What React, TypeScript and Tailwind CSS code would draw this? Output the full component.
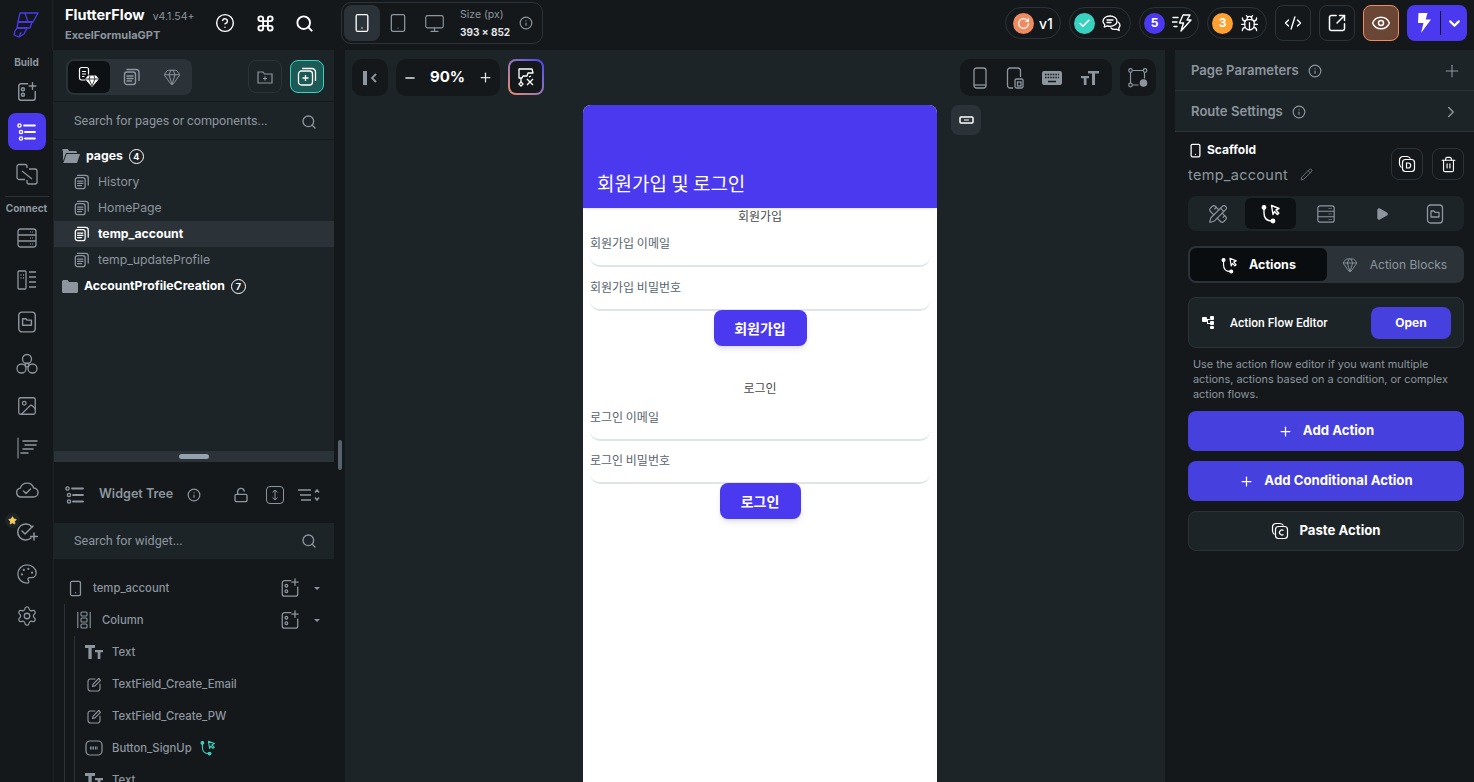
import React from "react";
import {
  CircleHelp, Command, Search, Smartphone, Tablet, Monitor, Info, Minus, Plus, ChevronDown, ChevronRight,
  Eye, Bug, CodeXml, SquareArrowOutUpRight, Check, Trash2, LockOpen,
  Play, Gem, Palette, Settings, Image, Star, RotateCw, Pencil, PencilRuler,
} from "lucide-react";

type P = { s?: number; c?: string };

const Pages = ({ s = 18, c = "#8d969e" }: P) => (
  <svg width={s} height={s} viewBox="0 0 18 18" fill="none" stroke={c} strokeWidth="1.4" strokeLinecap="round" strokeLinejoin="round">
    <rect x="1.5" y="4" width="11" height="12.5" rx="2.5" />
    <path d="M4 1.5h9a3 3 0 0 1 3 3v8" />
    <path d="M4 8h6M4 10.5h6M4 13h4.5" />
  </svg>
);
const ActionFlow = ({ s = 20, c = "#fff" }: P) => (
  <svg width={s} height={s} viewBox="0 0 20 20" fill="none" stroke={c} strokeWidth="1.4" strokeLinecap="round" strokeLinejoin="round">
    <circle cx="3" cy="3.5" r="1.7" fill={c} />
    <circle cx="12" cy="17" r="1.7" fill={c} />
    <path d="M3 5v4c0 5 3 8 8 8" />
    <path d="M10.500 1.500L18 4.500l-3 1.500 2.800 3.200-1.500 1.300L13.500 7.500 12 10.500z" />
  </svg>
);
const AddWidget = ({ s = 20, c = "#8d969e" }: P) => (
  <svg width={s} height={s} viewBox="0 0 20 20" fill="none" stroke={c} strokeWidth="1.3" strokeLinecap="round">
    <path d="M10.5 2.5H4.500a2 2 0 0 0-2 2v11a2 2 0 0 0 2 2h11a2 2 0 0 0 2-2V9.500" />
    <circle cx="6.3" cy="7.5" r="1.4" />
    <circle cx="6.3" cy="12.5" r="1.4" />
    <path d="M15 1.500v6M12 4.500h6" />
  </svg>
);
const Logo = () => (
  <svg width="26" height="28" viewBox="0 0 26 28" fill="none" stroke="#4b39ef" strokeWidth="1.3" strokeLinejoin="round">
    <path d="M7 2h18l-5 9H5z" />
    <path d="M12 2l3 9M5 11h14l-2 6H4z" />
    <path d="M4 17h10l-3 6-5 3-5-2 1-4z" />
    <path d="M6 26l2-5" />
  </svg>
);
const TreeList = ({ c = "#8d969e" }: P) => (
  <svg width="19" height="18" viewBox="0 0 19 18" fill="none" stroke={c} strokeWidth="1.4" strokeLinecap="round">
    <circle cx="2.500" cy="2.500" r="1.600" /><circle cx="4" cy="9" r="1.600" /><circle cx="4" cy="15.500" r="1.600" />
    <path d="M7 2.500h11M8 9h10M8 15.500h10" strokeWidth="1.800" />
  </svg>
);
const Btn = () => (
  <svg width="18" height="18" viewBox="0 0 18 18" fill="none">
    <rect x="1" y="2" width="16" height="14" rx="4" stroke="#8d969e" strokeWidth="1.200" />
    <path d="M5 9h8" stroke="#8d969e" strokeWidth="3" strokeDasharray="1.500 1" />
  </svg>
);
const TextT = ({ s = 18 }: P) => (
  <svg width={s} height={s} viewBox="0 0 18 16" fill="#8d969e">
    <path d="M0 1h10v3H6.700v11H3.400V4H0zM10 6h8v2.300h-2.600V15h-2.700V8.300H10z" />
  </svg>
);
const ColumnIcon = () => (
  <svg width="14" height="18" viewBox="0 0 14 18" fill="none" stroke="#8d969e" strokeWidth="1.100">
    <path d="M.8 1v16M13.200 1v16" />
    <rect x="4" y="1" width="6" height="4" rx="1" /><rect x="4" y="7" width="6" height="4" rx="1" /><rect x="4" y="13" width="6" height="4" rx="1" />
  </svg>
);
const EditBox = () => (
  <svg width="15" height="15" viewBox="0 0 15 15" fill="none" stroke="#8d969e" strokeWidth="1.100" strokeLinecap="round" strokeLinejoin="round">
    <path d="M8 2H3.500A2.500 2.500 0 0 0 1 4.500v7A2.500 2.500 0 0 0 3.500 14h7a2.500 2.500 0 0 0 2.500-2.500V7" />
    <path d="M5.500 9.500l.6-2.400L11.700 1.500l1.800 1.800-5.600 5.600z" />
  </svg>
);
const PagesGem = () => (
  <svg width="22" height="22" viewBox="0 0 22 22" fill="none" stroke="#fff" strokeWidth="1.200" strokeLinecap="round" strokeLinejoin="round">
    <path d="M7 14H3.500A2 2 0 0 1 1.500 12V3.500a2 2 0 0 1 2-2h5a2 2 0 0 1 2 2V8" />
    <path d="M4.500 5.500h3M4.500 8h3M4.500 10.500h1.500" />
    <path d="M10.500 10h7l2.500 3-6 7-6-7z" fill="#fff" />
    <path d="M8 13h12M12 10l-1 3 3 7 3-7-1-3" stroke="#14181b" strokeWidth=".8" />
  </svg>
);
const Connectors = () => (
  <svg width="22" height="22" viewBox="0 0 22 22" fill="none" stroke="#8d969e" strokeWidth="1.300">
    <path d="M9 16.500H3a2 2 0 0 1-2-2v-11a2 2 0 0 1 2-2h6a2 2 0 0 1 2 2V5" />
    <path d="M13 6h6a2 2 0 0 1 2 2v11a2 2 0 0 1-2 2h-6a2 2 0 0 1-2-2v-2" />
    <path d="M6 8l10 8" />
  </svg>
);
const ThreeNodes = () => (
  <svg width="22" height="22" viewBox="0 0 22 22" fill="none" stroke="#8d969e" strokeWidth="1.300">
    <circle cx="11" cy="6" r="4.500" /><circle cx="5.500" cy="15.500" r="4.500" /><circle cx="16.500" cy="15.500" r="4.500" /><circle cx="11" cy="12" r="1.800" />
  </svg>
);
const FileFolder = ({ s = 20, c = "#8d969e" }: P) => (
  <svg width={s} height={s} viewBox="0 0 20 20" fill="none" stroke={c} strokeWidth="1.300" strokeLinejoin="round">
    <rect x="2.500" y="1" width="15" height="18" rx="3" />
    <path d="M6 7h3l1 1.300h4V13H6z" />
  </svg>
);
const DbIcon = ({ s = 22, c = "#8d969e" }: P) => (
  <svg width={s} height={s} viewBox="0 0 22 22" fill="none" stroke={c} strokeWidth="1.300">
    <rect x="2" y="2" width="18" height="18" rx="2.500" /><path d="M2 8h18M2 14h18" />
    <path d="M14 5h3M14 11h3M14 17h3" strokeWidth="1.200" strokeDasharray="1 1" />
  </svg>
);
const DataTypes = () => (
  <svg width="22" height="22" viewBox="0 0 22 22" fill="none" stroke="#8d969e" strokeWidth="1.300">
    <rect x="2" y="2" width="8" height="18" rx="1" />
    <path d="M4.500 6h1M7 6h1M4.500 9h1M7 9h1M13 3h7M13 8h7M13 13h7M13 18h7" />
  </svg>
);
const Storyboard = () => (
  <svg width="22" height="22" viewBox="0 0 22 22" fill="none" stroke="#8d969e" strokeWidth="1.500" strokeLinecap="round">
    <path d="M2 1v20" strokeWidth="1.100" /><path d="M7 4h14M9 8h11M7 12h10M5 16h7" />
  </svg>
);
const CloudCheck = () => (
  <svg width="24" height="18" viewBox="0 0 24 18" fill="none" stroke="#8d969e" strokeWidth="1.400" strokeLinecap="round" strokeLinejoin="round">
    <path d="M6 16a4.500 4.500 0 0 1-.7-8.900A7 7 0 0 1 18.700 7a4.500 4.500 0 0 1-.2 9z" /><path d="M8.500 10l2.500 2.500 4.500-4.500" />
  </svg>
);
const CheckPlus = () => (
  <svg width="22" height="20" viewBox="0 0 22 20" fill="none" stroke="#8d969e" strokeWidth="1.500" strokeLinecap="round" strokeLinejoin="round">
    <path d="M16 5a8 8 0 1 0-1 11" /><path d="M6 9l3 3 8-8" /><path d="M18 11v7M14.500 14.500h7" />
  </svg>
);
const SmallAddBox = () => (
  <svg width="20" height="20" viewBox="0 0 22 22" fill="none" stroke="#8d969e" strokeWidth="1.400" strokeLinecap="round">
    <path d="M12 3H5a2.500 2.500 0 0 0-2.500 2.500v12A2.500 2.500 0 0 0 5 20h12a2.500 2.500 0 0 0 2.500-2.500V10" />
    <circle cx="7" cy="8.500" r="1.500" /><circle cx="7" cy="14.500" r="1.500" /><path d="M16.500 1v7M13 4.500h7" />
  </svg>
);
const CopyLetter = ({ l, s = 18 }: { l: string; s?: number }) => (
  <svg width={s} height={s} viewBox="0 0 18 18" fill="none" stroke="#fff" strokeWidth="1.200">
    <path d="M3.500 12.500A5 5 0 0 1 1.500 9V5a3.500 3.500 0 0 1 3.500-3.500h4a5 5 0 0 1 3.500 2" />
    <rect x="4.500" y="4.500" width="12" height="12" rx="3" />
    <path d={l === "C" ? "M12.500 8.500a2.500 2.500 0 1 0 0 4" : "M8.500 8h1.700a2.500 2.500 0 0 1 0 5H8.500z"} />
  </svg>
);
const DeviceFrame = () => (
  <svg width="18" height="22" viewBox="0 0 18 22" fill="none" stroke="#8d969e" strokeWidth="1.300">
    <path d="M7 21H4a2.500 2.500 0 0 1-2.500-2.500v-15A2.500 2.500 0 0 1 4 1h8a2.500 2.500 0 0 1 2.500 2.500V10" />
    <rect x="9" y="12" width="8" height="9" rx="1.500" /><rect x="11.500" y="15" width="3.500" height="4" />
  </svg>
);
const PhoneThin = () => (
  <svg width="14" height="22" viewBox="0 0 14 22" fill="none" stroke="#8d969e" strokeWidth="1.300">
    <rect x="1" y="1" width="12" height="20" rx="2.500" /><path d="M1 18h12" />
  </svg>
);
const KeyboardFill = () => (
  <svg width="20" height="14" viewBox="0 0 20 14">
    <rect x="0" y="0" width="20" height="14" rx="2" fill="#8d969e" />
    <path d="M3 3.500h14M3 6.500h14" stroke="#14181b" strokeWidth="1.300" strokeDasharray="1.500 1.100" />
    <path d="M6 10.500h8" stroke="#14181b" strokeWidth="1.500" />
  </svg>
);
const TextSize = () => (
  <svg width="18" height="14" viewBox="0 0 18 14" fill="#8d969e">
    <path d="M7 0h11v2.500h-4V14h-3V2.500H7zM0 5h8v2.300H5.500V14H2.800V7.300H0z" />
  </svg>
);
const FlowSettings = () => (
  <svg width="20" height="20" viewBox="0 0 20 20" fill="none" stroke="#8d969e" strokeWidth="1.200">
    <circle cx="2.500" cy="2.500" r="1.800" /><circle cx="17" cy="2.500" r="1.800" /><circle cx="2.500" cy="17" r="1.800" />
    <path d="M4.500 2.500h10.500M2.500 4.500V15M4.500 17h6M16.500 4.500v6" />
    <circle cx="15.500" cy="15" r="3.200" fill="#8d969e" />
  </svg>
);
const NoDraw = () => (
  <svg width="20" height="20" viewBox="0 0 20 20" fill="none" stroke="#fff" strokeWidth="1.300" strokeLinejoin="round">
    <path d="M3 2h13l1 4h-5l-1 3H7l-1 2H3z" /><path d="M5 11v4" /><path d="M5 15l2 2-2 2-2-2z" /><path d="M11 12l6 6M17 12l-6 6" /><path d="M13 10l2-1" />
  </svg>
);
const FlowSmall = () => (
  <svg width="13" height="13" viewBox="0 0 13 13" fill="#fff">
    <rect x="0" y="1" width="5" height="5" rx="1" /><rect x="8" y="0" width="4" height="4" rx="1" /><rect x="8" y="5" width="4" height="4" rx="1" /><rect x="8" y="10" width="4" height="3" rx="1" />
    <path d="M5 3h3v1H6v3h2v1H5z" />
  </svg>
);
const FolderOpenFill = () => (
  <svg width="18" height="14" viewBox="0 0 18 14" fill="#8d969e">
    <path d="M0 1.500A1.500 1.500 0 0 1 1.500 0h4L7 2h6.500A1.500 1.500 0 0 1 15 3.500V4H4L1 12V1.500z" />
    <path d="M4.700 5H18l-3 9H1.300z" />
  </svg>
);
const FolderFill = () => (
  <svg width="16" height="13" viewBox="0 0 16 13" fill="#8d969e">
    <path d="M0 1.500A1.500 1.500 0 0 1 1.500 0h4l1.500 2h7.500A1.500 1.500 0 0 1 16 3.500V11.500A1.500 1.500 0 0 1 14.500 13h-13A1.500 1.500 0 0 1 0 11.500z" />
  </svg>
);
const ChatBubbles = () => (
  <svg width="19" height="17" viewBox="0 0 19 17" fill="none" stroke="#fff" strokeWidth="1.300" strokeLinejoin="round" strokeLinecap="round">
    <path d="M8 1c-4 0-7 2.300-7 5.200 0 1.400.7 2.600 1.800 3.500L2.300 12l3-1.200c.9.300 1.800.5 2.700.5 4 0 7-2.200 7-5.100S12 1 8 1z" />
    <path d="M5 5h6M5 7.500h4" />
    <path d="M16 7c1.300.9 2 2 2 3.300 0 1-.5 1.900-1.300 2.600l.5 2.600-2.800-1.300c-2 .5-4.300 0-5.400-1.200" />
  </svg>
);
const SpeedBolt = () => (
  <svg width="20" height="18" viewBox="0 0 20 18" fill="none" stroke="#fff" strokeWidth="1.400" strokeLinejoin="round" strokeLinecap="round">
    <path d="M1 3.500h5M0 8h5M2 12.500h3" />
    <path d="M11 1l7 0-3 5h4L9 17l2.500-8H7.500z" />
  </svg>
);
const BoltSolid = () => (
  <svg width="16" height="20" viewBox="0 0 16 20" fill="#fff">
    <path d="M2.500 0h9l-1.800 6.500H15L5 20l2.500-10H2z" />
  </svg>
);

const Pill = ({ children, w }: { children: React.ReactNode; w: string }) => (
  <div className={`flex h-[32px] items-center rounded-full border border-[#2b3339] ${w}`}>{children}</div>
);
const Square = ({ children, extra }: { children: React.ReactNode; extra: string }) => (
  <div className={`flex h-[36px] w-[36px] items-center justify-center rounded-[8px] border ${extra}`}>{children}</div>
);

function RailItem({ children }: { children: React.ReactNode }) {
  return <div className="flex h-[42px] w-full items-center justify-center">{children}</div>;
}

function Rail() {
  return (
    <div className="flex w-[54px] shrink-0 flex-col items-center border-r border-[#1d2428] bg-[#14181b]">
      <div className="mt-[5px] text-[10px] font-bold leading-[14px] text-[#8d969e]">Build</div>
      <div className="mt-[2px] flex h-[42px] w-full items-center justify-center"><AddWidget s={22} /></div>
      <div className="flex h-[37px] w-[38px] items-center justify-center rounded-[8px] bg-[#4b39ef]"><TreeList c="#fff" /></div>
      <div className="mt-[3px] flex h-[42px] w-full items-center justify-center"><Connectors /></div>
      <div className="mt-[1px] h-px w-[44px] bg-[#2b3339]" />
      <div className="mt-[4px] text-[10px] font-bold leading-[14px] text-[#8d969e]">Connect</div>
      <div className="mt-[2px] flex w-full flex-col">
        <RailItem><DbIcon /></RailItem>
        <RailItem><DataTypes /></RailItem>
        <RailItem><FileFolder s={22} /></RailItem>
        <RailItem><ThreeNodes /></RailItem>
        <RailItem><Image size={22} color="#8d969e" strokeWidth={1.4} /></RailItem>
        <RailItem><Storyboard /></RailItem>
        <RailItem><CloudCheck /></RailItem>
        <RailItem>
          <div className="relative">
            <CheckPlus />
            <div className="absolute left-[-11px] top-[-9px] flex h-[15px] w-[15px] items-center justify-center rounded-full bg-[#1d2428]">
              <Star size={9} fill="#f9cf58" color="#f9cf58" />
            </div>
          </div>
        </RailItem>
        <RailItem><Palette size={22} color="#8d969e" strokeWidth={1.4} /></RailItem>
        <RailItem><Settings size={22} color="#8d969e" strokeWidth={1.4} /></RailItem>
      </div>
    </div>
  );
}

function PageRow({ label, active }: { label: string; active?: boolean }) {
  return (
    <div className={`flex h-[26px] items-center gap-[8px] pl-[20px] text-[12.25px] ${active ? "bg-[#2b3339] font-bold text-white" : "text-[#8d969e]"}`}>
      <Pages s={16} c={active ? "#fff" : "#8d969e"} />
      <span>{label}</span>
    </div>
  );
}

function Badge({ n }: { n: number }) {
  return <span className="flex h-[15px] w-[15px] items-center justify-center rounded-full border border-white text-[9px] font-bold leading-none text-white">{n}</span>;
}

function TreeRow({ icon, label, extra, add }: { icon: React.ReactNode; label: string; extra?: React.ReactNode; add?: boolean }) {
  return (
    <div className="flex h-[32px] items-center">
      <div className="flex w-[26px] shrink-0 justify-center">{icon}</div>
      <span className="ml-[5px] text-[11.3px] font-medium text-[#8d969e]">{label}</span>
      {extra}
      {add && (
        <div className="ml-auto flex items-center gap-[14px] pr-[14px]">
          <SmallAddBox />
          <div className="h-0 w-0 border-x-[3px] border-t-[3px] border-x-transparent border-t-[#8d969e]" />
        </div>
      )}
    </div>
  );
}

function LeftPanel() {
  return (
    <div className="flex w-[280px] shrink-0 flex-col bg-[#1d2428]">
      <div className="flex h-[401px] shrink-0 flex-col">
        <div className="flex h-[52px] items-center justify-between border-b border-[#14181b] pl-[12px] pr-[10px] pt-[2px]">
          <div className="flex h-[36px] w-[126px] items-center rounded-[8px] bg-[#2b3339] p-[2px]">
            <div className="flex h-[32px] w-[42px] items-center justify-center rounded-[6px] bg-[#0e1114]"><PagesGem /></div>
            <div className="flex w-[44px] justify-center"><Pages s={18} /></div>
            <div className="flex w-[36px] justify-center"><Gem size={18} color="#8d969e" strokeWidth={1.3} /></div>
          </div>
          <div className="flex items-center gap-[8px]">
            <div className="flex h-[33px] w-[34px] items-center justify-center rounded-[8px] border border-[#2b3339]">
              <svg width="16" height="14" viewBox="0 0 16 14" fill="none" stroke="#8d969e" strokeWidth="1.200"><path d="M1 2h5l1.500 2H15v9H1z" /><path d="M8 6.500v4M6 8.500h4" /></svg>
            </div>
            <div className="flex h-[33px] w-[34px] items-center justify-center rounded-[8px] border border-[#39d2c0] bg-[#1c5a55]">
              <svg width="20" height="20" viewBox="0 0 20 20" fill="none" stroke="#fff" strokeWidth="1.300"><rect x="1.500" y="4" width="14" height="14" rx="3" /><path d="M5 1.500h10a3.500 3.500 0 0 1 3.500 3.500v9M8.500 8v6M5.500 11h6" /></svg>
            </div>
          </div>
        </div>
        <div className="flex h-[38px] items-center justify-between border-b border-[#14181b] pl-[20px] pr-[17px] pt-[2px] font-['Roboto',sans-serif] text-[12.65px] text-[#8d969e]">
          <span>Search for pages or components...</span>
          <Search size={16} color="#8d969e" />
        </div>
        <div className="pt-[3px]">
          <div className="flex h-[26px] items-center pl-[8px] text-[12.25px] font-bold text-white">
            <FolderOpenFill />
            <span className="ml-[6px]">pages</span>
            <span className="ml-[6px]"><Badge n={4} /></span>
          </div>
          <PageRow label="History" />
          <PageRow label="HomePage" />
          <PageRow label="temp_account" active />
          <PageRow label="temp_updateProfile" />
          <div className="flex h-[26px] items-center pl-[8px] text-[12.25px] font-bold text-white">
            <FolderFill />
            <span className="ml-[6px]">AccountProfileCreation</span>
            <span className="ml-[6px]"><Badge n={7} /></span>
          </div>
        </div>
      </div>
      <div className="flex h-[11px] shrink-0 items-center justify-center bg-[#2b3339]">
        <div className="h-[5px] w-[30px] rounded-full bg-[#95a1ac]" />
      </div>
      <div className="flex min-h-0 flex-1 flex-col overflow-hidden bg-[#14181b]">
        <div className="flex h-[61px] shrink-0 items-center pl-[11px] pt-[4px]">
          <TreeList />
          <span className="ml-[15px] w-[77px] whitespace-nowrap text-[12.6px] font-semibold text-[#8d969e]">Widget Tree</span>
          <Info size={14} color="#8d969e" className="ml-[11px]" />
          <LockOpen size={16} color="#8d969e" className="ml-[32px]" />
          <div className="ml-[17px] flex h-[18px] w-[18px] items-center justify-center rounded-[4px] border border-[#8d969e]">
            <svg width="8" height="12" viewBox="0 0 8 12" fill="none" stroke="#8d969e" strokeWidth="1"><path d="M4 1v10M1.500 3.500L4 1l2.500 2.500M1.500 8.500L4 11l2.500-2.500" /></svg>
          </div>
          <svg className="ml-[14px]" width="22" height="14" viewBox="0 0 22 14" fill="none" stroke="#8d969e" strokeWidth="1.500"><path d="M0 2h13M2 7h11M3 12h10M17 4.500L19 2l2 2.500M17 9.500l2 2.500 2-2.500" /></svg>
        </div>
        <div className="flex h-[36px] shrink-0 items-center justify-between bg-[#1d2428] pl-[20px] pr-[17px] font-['Roboto',sans-serif] text-[12.65px] text-[#8d969e]">
          <span>Search for widget...</span>
          <Search size={16} color="#8d969e" />
        </div>
        <div className="mt-[13px] pl-[8px]">
          <TreeRow icon={<Smartphone size={17} color="#8d969e" strokeWidth={1.8} />} label="temp_account" add />
          <div className="ml-[2px] border-l border-[#2b3339]">
            <div className="pl-[6px]"><TreeRow icon={<ColumnIcon />} label="Column" add /></div>
            <div className="ml-[9px] border-l border-[#2b3339] pl-[6px]">
              <TreeRow icon={<TextT />} label="Text" />
              <TreeRow icon={<EditBox />} label="TextField_Create_Email" />
              <TreeRow icon={<EditBox />} label="TextField_Create_PW" />
              <TreeRow icon={<Btn />} label="Button_SignUp" extra={<span className="ml-[8px]"><ActionFlow s={16} c="#39d2c0" /></span>} />
              <TreeRow icon={<TextT />} label="Text" />
            </div>
          </div>
        </div>
      </div>
    </div>
  );
}

function ScrollStrip() {
  return (
    <div className="flex w-[11px] shrink-0 flex-col items-center bg-[#14181b] pt-[390px]">
      <div className="h-[30px] w-[4px] rounded-full bg-[#57636c]" />
    </div>
  );
}

const Toolbox = ({ children, w }: { children: React.ReactNode; w: string }) => (
  <div className={`flex h-[37px] items-center rounded-[10px] bg-[#14181b] ${w}`}>{children}</div>
);

function Field({ label }: { label: string }) {
  return (
    <div className="h-[44px] px-[7px]">
      <div className="flex h-[38px] items-start rounded-b-[10px] border-b-2 border-[#e0e3e7] pt-[5px] text-[12px] leading-[18px] text-[#57636c]">{label}</div>
    </div>
  );
}

function Canvas() {
  return (
    <div className="flex min-w-0 flex-1 flex-col overflow-hidden bg-[#1d2428]">
      <div className="flex h-[55px] shrink-0 items-start pl-[7px] pt-[9px] pr-[9px]">
        <Toolbox w="w-[36px] justify-center">
          <svg width="16" height="16" viewBox="0 0 16 16" fill="none"><rect x="1" y="1" width="4" height="14" fill="#8d969e" /><path d="M14 4l-4 4 4 4" stroke="#8d969e" strokeWidth="1.800" /></svg>
        </Toolbox>
        <Toolbox w="ml-[8px] w-[104px] justify-between px-[7px]">
          <Minus size={14} color="#e0e3e7" strokeWidth={2.500} />
          <span className="text-[15px] font-bold text-white">90%</span>
          <Plus size={15} color="#e0e3e7" strokeWidth={2} />
        </Toolbox>
        <div className="ml-[8px] h-[36px] w-[36px] rounded-[8px] bg-linear-to-tr from-[#ee8b60] to-[#4b39ef] p-[2px]">
          <div className="flex h-full w-full items-center justify-center rounded-[6px] bg-[#14181b]"><NoDraw /></div>
        </div>
        <div className="ml-auto flex items-start gap-[8px]">
          <Toolbox w="w-[152px] justify-around px-[4px]">
            <PhoneThin />
            <DeviceFrame />
            <KeyboardFill />
            <TextSize />
          </Toolbox>
          <Toolbox w="w-[36px] justify-center"><FlowSettings /></Toolbox>
        </div>
      </div>
      <div className="ml-[238px] flex min-h-0 flex-1 items-start overflow-hidden">
        <div className="h-[720px] w-[354px] shrink-0 rounded-t-[8px] bg-white font-['Noto_Sans_CJK_KR','Inter',sans-serif]">
          <div className="flex h-[103px] items-end rounded-t-[8px] bg-[#4b39ef] px-[14px] pb-[11px] text-[19px] leading-[28px] text-white shadow-sm">회원가입 및 로그인</div>
          <div className="h-[15px] text-center text-[12px] leading-[15px] text-[#4a4a4a]">회원가입</div>
          <div className="mt-[6px]"><Field label="회원가입 이메일" /></div>
          <Field label="회원가입 비밀번호" />
          <div className="flex justify-center">
            <div className="mt-[-7px] flex h-[36px] w-[93px] items-center justify-center rounded-[8px] bg-[#4b39ef] text-[14px] font-bold text-white shadow-md">회원가입</div>
          </div>
          <div className="mt-[33px] text-center text-[12px] leading-[18px] text-[#4a4a4a]">로그인</div>
          <div className="mt-[6px]"><Field label="로그인 이메일" /></div>
          <div className="mt-[-1px]"><Field label="로그인 비밀번호" /></div>
          <div className="flex justify-center">
            <div className="mt-[-7px] flex h-[36px] w-[81px] items-center justify-center rounded-[8px] bg-[#4b39ef] text-[14px] font-bold text-white shadow-md">로그인</div>
          </div>
        </div>
        <div className="ml-[14px] flex h-[30px] w-[30px] items-center justify-center rounded-[8px] bg-[#2b3339]">
          <svg width="15" height="8" viewBox="0 0 15 8" fill="none"><rect x="1" y="1" width="13" height="6" rx="1" stroke="#fff" strokeWidth="1.500" /><path d="M5 4h5" stroke="#fff" strokeWidth="1" /></svg>
        </div>
      </div>
    </div>
  );
}

const ActionBtn = ({ label, plus }: { label: string; plus?: boolean }) => (
  <div className={`flex h-[40px] items-center justify-center gap-[10px] rounded-[8px] text-[13.2px] font-bold text-white ${plus ? "bg-[#4640de]" : "border border-[#2b3339] bg-[#1d2428]"}`}>
    {plus ? <Plus size={15} color="#fff" /> : <CopyLetter l="C" />}
    <span>{label}</span>
  </div>
);

function RightPanel() {
  return (
    <div className="flex w-[299px] shrink-0 flex-col bg-[#14181b]">
      <div className="flex h-[41px] items-center border-b border-[#2b3339] bg-[#1d2428] pl-[16px] pr-[12px] pt-[1px] text-[13.1px] font-semibold text-[#8d969e]">
        <span>Page Parameters</span>
        <Info size={14} color="#8d969e" className="ml-[9px]" />
        <Plus size={20} color="#8d969e" strokeWidth={1.300} className="ml-auto" />
      </div>
      <div className="flex h-[41px] items-center border-b border-[#2b3339] bg-[#1d2428] pl-[16px] pr-[14px] pt-[2px] text-[13.1px] font-semibold text-[#8d969e]">
        <span>Route Settings</span>
        <Info size={14} color="#8d969e" className="ml-[9px]" />
        <ChevronRight size={18} color="#8d969e" className="ml-auto" />
      </div>
      <div className="flex flex-col pl-[13px] pr-[10px]">
        <div className="mt-[8px] flex h-[48px] items-start justify-between">
          <div>
            <div className="flex h-[20px] items-center gap-[4px] text-[12px] font-bold text-white">
              <Smartphone size={15} color="#fff" strokeWidth={2} /> Scaffold
            </div>
            <div className="mt-[4px] flex items-center gap-[12px] text-[14.500px] tracking-[0.3px] text-[#8d969e]">
              <span>temp_account</span>
              <Pencil size={13} color="#8d969e" strokeWidth={1.300} />
            </div>
          </div>
          <div className="mt-[8px] flex gap-[9px]">
            <div className="flex h-[32px] w-[32px] items-center justify-center rounded-[8px] border border-[#2b3339]"><CopyLetter l="D" /></div>
            <div className="flex h-[32px] w-[32px] items-center justify-center rounded-[8px] border border-[#2b3339]"><Trash2 size={17} color="#fff" strokeWidth={1.600} /></div>
          </div>
        </div>
        <div className="mt-[8px] flex h-[35px] items-center rounded-[8px] bg-[#1d2428] px-[3px]">
          <div className="flex w-[54px] justify-center"><PencilRuler size={20} color="#8d969e" strokeWidth={1.400} /></div>
          <div className="flex h-[31px] w-[51px] items-center justify-center rounded-[6px] bg-[#0e1114]"><ActionFlow /></div>
          <div className="flex w-[60px] justify-center"><DbIcon s={20} /></div>
          <div className="flex w-[52px] justify-center"><Play size={14} fill="#8d969e" color="#8d969e" /></div>
          <div className="flex flex-1 justify-center"><FileFolder /></div>
        </div>
        <div className="mt-[15px] flex h-[37px] items-center rounded-[8px] bg-[#2b3339] p-[2px]">
          <div className="flex h-[33px] w-[137px] items-center justify-center gap-[11px] rounded-[6px] bg-[#0a0d10] pt-[1px] text-[12.500px] font-bold text-white">
            <ActionFlow s={17} /> Actions
          </div>
          <div className="flex flex-1 items-center justify-center gap-[12px] text-[12px] text-[#8d969e]">
            <Gem size={16} color="#8d969e" strokeWidth={1.300} /> Action Blocks
          </div>
        </div>
        <div className="mt-[14px] flex h-[51px] items-center rounded-[8px] border border-[#2b3339] bg-[#1d2428] pl-[13px] pr-[12px]">
          <FlowSmall />
          <span className="ml-[15px] font-['Roboto',sans-serif] text-[12px] font-medium text-white">Action Flow Editor</span>
          <div className="ml-auto flex h-[32px] w-[80px] items-center justify-center rounded-[8px] bg-[#4640de] text-[12px] font-bold text-white">Open</div>
        </div>
        <p className="mt-[9px] px-[5px] text-[10.900px] leading-[15px] text-[#8d969e]">
          Use the action flow editor if you want multiple actions, actions based on a condition, or complex action flows.
        </p>
        <div className="mt-[9px]"><ActionBtn label="Add Action" plus /></div>
        <div className="mt-[10px]"><ActionBtn label="Add Conditional Action" plus /></div>
        <div className="mt-[10px]"><ActionBtn label="Paste Action" /></div>
      </div>
    </div>
  );
}

function TopBar() {
  return (
    <div className="flex h-[50px] shrink-0 items-start bg-[#14181b]">
      <div className="flex h-[50px] w-[53px] shrink-0 items-center justify-center border-r border-[#1d2428]"><Logo /></div>
      <div className="ml-[12px] w-[135px] pt-[6px]">
        <div className="flex items-baseline gap-[8px]">
          <span className="text-[14.500px] font-bold leading-[18px] text-white">FlutterFlow</span>
          <span className="text-[10.500px] text-[#8d969e]">v4.1.54+</span>
        </div>
        <div className="mt-[3px] text-[11px] font-bold leading-[14px] text-[#8d969e]">ExcelFormulaGPT</div>
      </div>
      <div className="mt-[13px] flex items-center gap-[20.5px] pl-[15px]">
        <CircleHelp size={20} color="#fff" strokeWidth={1.700} />
        <Command size={19} color="#fff" strokeWidth={2.400} />
        <Search size={19} color="#fff" strokeWidth={2.400} />
      </div>
      <div className="ml-[27px] mt-[2px] flex h-[42px] w-[202px] shrink-0 items-center rounded-[10px] border border-[#2b3339] pl-[2px]">
        <div className="flex h-[36px] w-[36px] items-center justify-center rounded-[8px] bg-[#2b3339]"><Smartphone size={20} color="#fff" strokeWidth={1.600} /></div>
        <div className="flex w-[36px] justify-center"><Tablet size={20} color="#8d969e" strokeWidth={1.500} /></div>
        <div className="flex w-[36px] justify-center"><Monitor size={21} color="#8d969e" strokeWidth={1.300} /></div>
        <div className="ml-[8px] flex flex-col">
          <span className="text-[10.500px] leading-[18px] text-[#8d969e]">Size (px)</span>
          <span className="text-[10px] font-bold leading-[16px] text-[#e0e3e7]">393 × 852</span>
        </div>
        <Info size={14} color="#8d969e" className="ml-[9px]" />
      </div>
      <div className="ml-auto mt-[7px] flex items-start gap-[8px] pr-[7px]">
        <Pill w="w-[56px] pl-[7px] gap-[5px]">
          <div className="flex h-[21px] w-[21px] items-center justify-center rounded-full bg-[#ee8b60]"><RotateCw size={13} color="#fff" strokeWidth={2.200} /></div>
          <span className="text-[14px] font-medium text-white">v1</span>
        </Pill>
        <Pill w="w-[62px] pl-[4px] gap-[7px]">
          <div className="flex h-[21px] w-[21px] items-center justify-center rounded-full bg-[#39d2c0]"><Check size={13} color="#fff" strokeWidth={3} /></div>
          <ChatBubbles />
        </Pill>
        <Pill w="w-[60px] pl-[4px] gap-[7px]">
          <div className="flex h-[21px] w-[21px] items-center justify-center rounded-full bg-[#4b39ef] text-[12px] font-bold text-white">5</div>
          <SpeedBolt />
        </Pill>
        <Pill w="w-[60px] pl-[4px] gap-[7px]">
          <div className="flex h-[21px] w-[21px] items-center justify-center rounded-full bg-[#ffa130] text-[12px] font-bold text-white">3</div>
          <Bug size={19} color="#fff" strokeWidth={1.600} />
        </Pill>
        <div className="mt-[-2px] flex gap-[8px]">
          <Square extra="border-[#2b3339]"><CodeXml size={18} color="#fff" strokeWidth={1.800} /></Square>
          <Square extra="border-[#2b3339]"><SquareArrowOutUpRight size={20} color="#fff" strokeWidth={1.800} /></Square>
          <Square extra="border-[#ee8b60] bg-[#6b4635]"><Eye size={20} color="#fff" strokeWidth={1.800} /></Square>
          <div className="flex h-[36px] w-[60px] items-center rounded-[8px] bg-[#4b39ef]">
            <div className="flex h-[24px] w-[34px] items-center justify-center border-r border-[#14181b]"><BoltSolid /></div>
            <div className="flex flex-1 justify-center"><ChevronDown size={17} color="#fff" strokeWidth={3} /></div>
          </div>
        </div>
      </div>
    </div>
  );
}

export default function App() {
  return (
    <div className="flex h-[782px] w-[1474px] flex-col overflow-hidden bg-[#14181b] font-['Inter',sans-serif]">
      <TopBar />
      <div className="flex min-h-0 flex-1">
        <Rail />
        <LeftPanel />
        <ScrollStrip />
        <Canvas />
        <div className="w-[10px] shrink-0 bg-[#14181b]" />
        <RightPanel />
      </div>
    </div>
  );
}
